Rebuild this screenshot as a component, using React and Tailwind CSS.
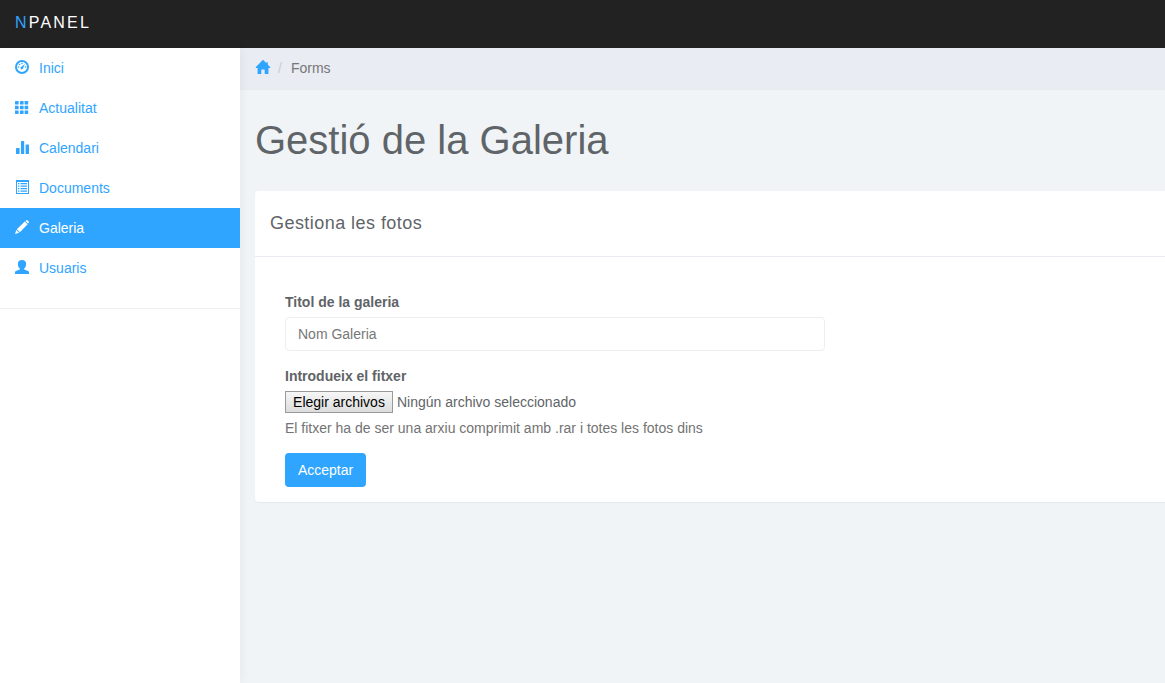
import React from "react";

function Icon({ children, className = "" }) {
  return (
    <svg viewBox="0 0 14 14" fill="currentColor" className={`h-[14px] w-[14px] shrink-0 ${className}`}>
      {children}
    </svg>
  );
}

const DashboardIcon = () => (
  <Icon>
    <circle cx="7" cy="7" r="6" fill="none" stroke="currentColor" strokeWidth="2" />
    <circle cx="3.5" cy="7" r=".8" />
    <circle cx="4.6" cy="4.5" r=".8" />
    <circle cx="7" cy="3.5" r=".8" />
    <circle cx="10.5" cy="7" r=".8" />
    <path d="M10 4 8.3 7.6A1.4 1.4 0 1 1 6.7 6.5z" />
  </Icon>
);

const GridIcon = () => (
  <Icon>
    <rect x="0" y="1" width="3.6" height="3.6" rx=".4" />
    <rect x="5" y="1" width="3.6" height="3.6" rx=".4" />
    <rect x="9.6" y="1" width="3.6" height="3.6" rx=".4" />
    <rect x="0" y="5.7" width="3.6" height="3.6" rx=".4" />
    <rect x="5" y="5.7" width="3.6" height="3.6" rx=".4" />
    <rect x="9.6" y="5.7" width="3.6" height="3.6" rx=".4" />
    <rect x="0" y="10.4" width="3.6" height="3.6" rx=".4" />
    <rect x="5" y="10.4" width="3.6" height="3.6" rx=".4" />
    <rect x="9.6" y="10.4" width="3.6" height="3.6" rx=".4" />
  </Icon>
);

const StatsIcon = () => (
  <Icon>
    <rect x="1" y="8" width="3.6" height="6" rx=".6" />
    <rect x="6" y="1" width="3.2" height="13" rx=".6" />
    <rect x="10.6" y="4.4" width="3.4" height="9.6" rx=".6" />
  </Icon>
);

const ListIcon = () => (
  <Icon>
    <path fillRule="evenodd" d="M1 0h13v14H1zM2 2v11h11V2z" />
    <path d="M3 3h1.4v1.2H3zM5.500 3H12v1.200H5.500zM3 5.500h1.400v1.200H3zM5.500 5.500H12v1.200H5.500zM3 8h1.400v1.200H3zM5.500 8H12v1.200H5.500zM3 10.500h1.400v1.200H3zM5.500 10.500H12v1.200H5.500z" />
  </Icon>
);

const PencilIcon = () => (
  <Icon>
    <path d="m10.5 1 .9-.7q.5-.4 1 0l1.300 1.300q.5.500.1 1l-.8.900zM9.800 1.500l2.800 2.800-7.700 7.900-3.100-3zM1.300 10.100l2.800 2.700L0 14z" />
  </Icon>
);

const UserIcon = () => (
  <Icon>
    <path d="M7 0c2.800 0 4.100 1.400 4.100 3.900 0 2.100-.7 3.700-1.900 4.700v1l3.900 1.500q.9.400.9 1.400V14H0v-1.500q0-1 .9-1.400l3.900-1.500v-1C3.600 7.600 2.900 6 2.900 3.900 2.900 1.400 4.200 0 7 0z" />
  </Icon>
);

const HomeIcon = () => (
  <svg viewBox="0 0 16 14" fill="currentColor" className="h-[14px] w-4 shrink-0">
    <path d="M7.7 0q.3-.2.6 0L15.300 7.300q.2.500-.4.600h-1.500V14H9.700v-4q0-.5-.5-.5H6.800q-.5 0-.5.500v4H2.600V7.900H1.100q-.6-.1-.4-.6z" />
    <path d="M11.300 2.200h1.500v3.200l-1.500-1.600z" />
  </svg>
);

const items = [
  { label: "Inici", Glyph: DashboardIcon },
  { label: "Actualitat", Glyph: GridIcon },
  { label: "Calendari", Glyph: StatsIcon },
  { label: "Documents", Glyph: ListIcon },
  { label: "Galeria", Glyph: PencilIcon, active: true },
  { label: "Usuaris", Glyph: UserIcon },
];

function Sidebar() {
  return (
    <nav className="z-10 w-60 shrink-0 bg-white shadow-[1px_0_10px_rgba(0,0,0,0.05)]">
      <ul className="border-b border-[#eeeeee] pb-5">
        {items.map(({ label, Glyph, active }) => (
          <li key={label}>
            <a
              href="#"
              className={`flex h-10 items-center gap-[10px] px-[15px] ${active ? "bg-[#30a5ff] text-white" : "text-[#30a5ff]"}`}
            >
              <span className="-mt-[2px]"><Glyph /></span>
              <span>{label}</span>
            </a>
          </li>
        ))}
      </ul>
    </nav>
  );
}

export default function App() {
  return (
    <div className="flex h-[683px] flex-col overflow-hidden bg-[#f1f4f7] font-['Liberation_Sans',Arial,sans-serif] text-sm leading-5 text-[#5f6468]">
      <header className="flex h-12 shrink-0 items-center bg-[#222222] px-[15px] pb-[2px]">
        <a href="#" className="text-base tracking-[2.2px] text-white">
          <span className="text-[#30a5ff]">N</span>PANEL
        </a>
      </header>
      <div className="flex min-h-0 flex-1">
        <Sidebar />
        <main className="min-w-0 flex-1">
          <div className="flex h-[41px] items-center bg-[#e9ecf2] px-[15px] pb-px shadow-[0_1px_0_rgba(0,0,0,0.03)]">
            <a href="#" className="-mt-[2px] text-[#30a5ff]"><HomeIcon /></a>
            <span className="ml-[7px] text-[#cccccc]">/</span>
            <span className="ml-[9px] text-[#777777]">Forms</span>
          </div>
          <h1 className="ml-[15px] mt-[29px] text-[40px] leading-[44px]">Gestió de la Galeria</h1>
          <section className="ml-[15px] mt-[29px] h-[311px] rounded-l bg-white shadow-[0_1px_1px_rgba(0,0,0,0.05)]">
            <h2 className="flex h-[66px] items-center border-b border-[#e9ecf2] px-[15px] pb-[2px] text-lg tracking-[0.45px]">
              Gestiona les fotos
            </h2>
            <form className="px-[30px] pt-[35px]" onSubmit={(e) => e.preventDefault()}>
              <label htmlFor="gallery" className="mb-[5px] block font-bold">Titol de la galeria</label>
              <input
                id="gallery"
                placeholder="Nom Galeria"
                className="block h-[34px] w-[540px] rounded border border-[#eeeeee] bg-white px-3 py-[6px] placeholder:text-[#777777]"
              />
              <div className="mb-[5px] mt-[15px] font-bold">Introdueix el fitxer</div>
              <div className="flex h-[22px] items-center gap-1">
                <button type="button" className="h-[22px] w-[108px] border border-[#999999] bg-linear-to-b from-[#f6f6f6] to-[#dddddd] leading-5 text-black">
                  Elegir archivos
                </button>
                <span>Ningún archivo seleccionado</span>
              </div>
              <p className="mt-[5px] text-[#737373]">El fitxer ha de ser una arxiu comprimit amb .rar i totes les fotos dins</p>
              <button type="submit" className="mt-[15px] block h-[34px] w-[81px] rounded bg-[#30a5ff] text-white">Acceptar</button>
            </form>
          </section>
        </main>
      </div>
    </div>
  );
}
